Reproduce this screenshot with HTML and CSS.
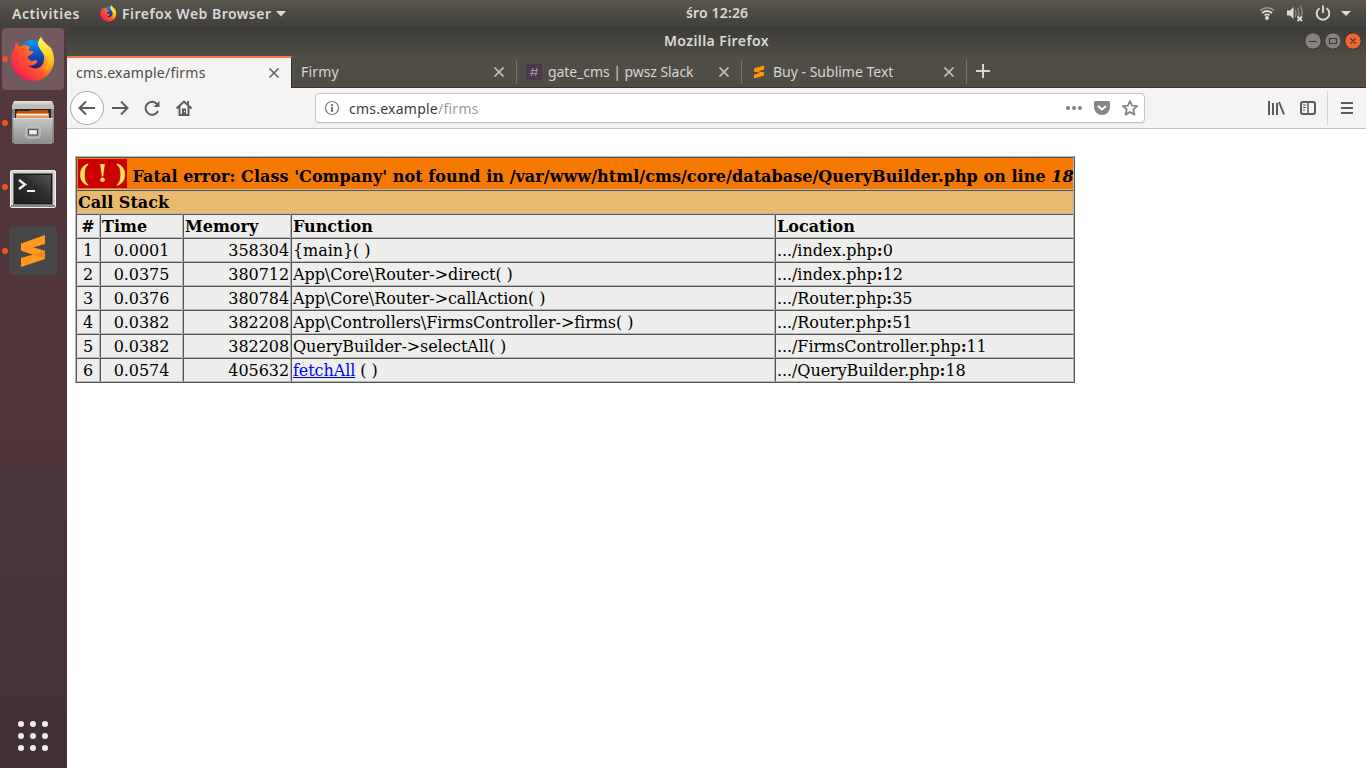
FILE: index.html
```html
<!DOCTYPE html>
<html lang="en">
<head>
<meta charset="utf-8">
<title>Mozilla Firefox</title>
<link rel="stylesheet" href="styles.css">
</head>
<body>
<svg width="0" height="0" class="defs">
  <defs>
    <linearGradient id="fire" x1="1" y1="0" x2="0.1" y2="1"><stop offset="0" stop-color="#fff44f"/><stop offset=".35" stop-color="#ffb01c"/><stop offset=".6" stop-color="#ff5a2c"/><stop offset=".85" stop-color="#f5204d"/><stop offset="1" stop-color="#c60b72"/></linearGradient>
    <linearGradient id="fox" x1="0" y1="1" x2="1" y2="0"><stop offset="0" stop-color="#f01867"/><stop offset=".5" stop-color="#ff4b2e"/><stop offset="1" stop-color="#ff9a1c"/></linearGradient>
    <linearGradient id="tail" x1="0" y1="0" x2="0" y2="1"><stop offset="0" stop-color="#fff36b"/><stop offset=".45" stop-color="#ffdf2e"/><stop offset="1" stop-color="#ff9d0a"/></linearGradient>
    <linearGradient id="globe" x1=".5" y1="0" x2=".5" y2="1"><stop offset="0" stop-color="#0a9bec"/><stop offset=".5" stop-color="#0a4fc8"/><stop offset="1" stop-color="#2a1668"/></linearGradient>
    <linearGradient id="metal" x1="0" y1="0" x2="0" y2="1"><stop offset="0" stop-color="#c6c6c6"/><stop offset="1" stop-color="#8c8c8c"/></linearGradient>
    <linearGradient id="lid" x1="0" y1="0" x2="0" y2="1"><stop offset="0" stop-color="#e8e8e8"/><stop offset="1" stop-color="#b4b4b4"/></linearGradient>
    <linearGradient id="screen" x1="0" y1="1" x2="1" y2="0"><stop offset="0" stop-color="#1d1f1e"/><stop offset=".55" stop-color="#2b2d2c"/><stop offset="1" stop-color="#555756"/></linearGradient>
    <symbol id="firefox" viewBox="0 0 44 46">
      <circle cx="22" cy="19" r="15" fill="url(#globe)"/>
      <path d="M5 6C6 9 8 10 9 11C12 9 16 9 19 11C18 13 17 14 18 15H22C22 18 19 19 17 20C16 23 19 25 22 25C25 24 27 25 26 26C24 29 20 30 17 29C22 35 32 33 33 24C34 19 31 16 28 11C26 7 28 3 30 1C32 6 37 9 40 12C49 29 37 45 22 45C8 45 0 34 0 23C0 18 2 14 4 12Z" fill="url(#fire)"/>
      <path d="M5 6C6 9 8 10 9 11C12 9 16 9 19 11C18 13 17 14 18 15H22C22 18 19 19 17 20C16 23 19 25 22 25C25 24 27 25 26 26C24 29 20 30 17 29C17 34 18 37 21 40C9 40 1 34 0 23C0 18 2 14 4 12Z" fill="url(#fox)"/>
      <path d="M30 1C32 6 37 9 40 14C44 23 40 30 35 35C35 31 38 25 33 18C29 13 24 8 30 1Z" fill="url(#tail)"/>
    </symbol>
    <symbol id="close" viewBox="0 0 12 12"><path d="M1.500 1.500L10.500 10.500M10.500 1.500L1.500 10.500" stroke="currentColor" stroke-width="1.700" fill="none"/></symbol>
  </defs>
</svg>
<div class="desktop">
  <header class="topbar">
    <span class="activities">Activities</span>
    <svg class="mini-fox" width="17" height="17"><use href="#firefox"/></svg>
    <span class="appname">Firefox Web Browser</span>
    <svg class="caret" width="10" height="6"><path d="M0 0H10L5 5.500Z" fill="#dcdad5"/></svg>
    <span class="clock">śro 12:26</span>
    <svg class="tray" width="100" height="27" viewBox="0 0 100 27">
      <g fill="none" stroke-width="1.700"><path d="M1 10.500Q8 5 15 10.500" stroke="#96948f"/><path d="M3 13Q8 9 13 13M5.500 15.200Q8 13.500 10.500 15.200" stroke="#dcdad5"/></g>
      <circle cx="8" cy="18" r="2" fill="#dcdad5"/>
      <path d="M28 10.500H31L34.500 7V19L31 15.500H28Z" fill="#dcdad5"/>
      <path d="M36 10Q38 13 36 17M38.500 8Q41.500 13 38.500 17M41 6Q45 12 42 16" fill="none" stroke="#8e8c86" stroke-width="1.300"/>
      <path d="M38.500 16.500L43 21M43 16.500L38.500 21" stroke="#dcdad5" stroke-width="1.800"/>
      <path d="M60.500 8.200A6.300 6.300 0 1 0 67.500 8.200M64 5.500V13" fill="none" stroke="#dcdad5" stroke-width="1.900"/>
      <path d="M82 11H92L87 16Z" fill="#dcdad5"/>
    </svg>
  </header>
  <div class="workspace">
    <aside class="dock">
      <div class="dock-item active"><i class="dot"></i><svg width="44" height="46"><use href="#firefox"/></svg></div>
      <div class="dock-item"><i class="dot"></i>
        <svg width="44" height="46" viewBox="0 0 44 46">
          <path d="M3 2H41L43 7V43H1V7Z" fill="#858585"/><path d="M3 1H41L43 6H1Z" fill="url(#lid)"/><rect x="1" y="5" width="42" height="4" fill="#bdbdbd"/>
          <rect x="4" y="9" width="36" height="10" fill="#292522"/><path d="M6 11H18L20 10H37V18H6Z" fill="#b94d16"/><rect x="5" y="13" width="33" height="5" fill="#ed944c"/><rect x="6" y="14" width="31" height="1.500" fill="#fff0dd"/>
          <path d="M2 18H42L41 44H3Z" fill="url(#metal)"/><path d="M2 18.500H42" stroke="#dedede"/>
          <rect x="15" y="27" width="14" height="11" rx="2" fill="#aaa" stroke="#c9c9c9"/><rect x="17.500" y="29.500" width="9" height="5.500" fill="#ececec" stroke="#555" stroke-width="1.200"/>
        </svg></div>
      <div class="dock-item terminal"><i class="dot"></i>
        <svg width="46" height="38" viewBox="0 0 46 38"><rect x=".5" y=".5" width="45" height="37" rx="1.500" fill="#d3d3d3" stroke="#eee"/><rect x="1" y="35" width="44" height="2" fill="#888"/><rect x="3.500" y="3.500" width="39" height="31" fill="#171918" stroke="#777"/><rect x="5" y="5" width="36" height="28" fill="url(#screen)"/><path d="M9 10L15 14.500L9 19" fill="none" stroke="#eee" stroke-width="2.400"/><rect x="17" y="20" width="8" height="2" fill="#f4f4f4"/></svg></div>
      <div class="dock-item"><i class="dot"></i>
        <svg width="48" height="48" viewBox="0 0 48 48"><rect width="48" height="48" rx="3" fill="#474747"/><path d="M12 16.500L36 8V17L24 20.500L36 24V32L12 40V31L24 27.500L12 23.500Z" fill="#ff9720"/><path d="M24 27.500L12 23.500L24 20.500L36 24V31L33 31Z" fill="#ff9720"/><path d="M24 27.500L36 24V31.500Z" fill="#ee8817"/></svg></div>
      <svg class="apps" width="32" height="32" viewBox="0 0 32 32" fill="#eeeceb"><circle cx="4" cy="4" r="3"/><circle cx="16" cy="4" r="3"/><circle cx="28" cy="4" r="3"/><circle cx="4" cy="16" r="3"/><circle cx="16" cy="16" r="3"/><circle cx="28" cy="16" r="3"/><circle cx="4" cy="28" r="3"/><circle cx="16" cy="28" r="3"/><circle cx="28" cy="28" r="3"/></svg>
    </aside>
    <main class="window">
      <div class="titlebar"><span class="wintitle">Mozilla Firefox</span>
        <svg class="controls" width="60" height="20" viewBox="0 0 60 20"><g stroke="#35342f"><circle cx="10" cy="10" r="8.200" fill="#85837c"/><circle cx="30" cy="10" r="8.200" fill="#85837c"/><circle cx="50" cy="10" r="8.200" fill="#f26434"/></g><path d="M6 10.500H14M26.500 7.500H33.500V12.500H26.500ZM47.500 7.500L52.500 12.500M52.500 7.500L47.500 12.500" fill="none" stroke="#3b3933" stroke-width="1.200"/></svg>
      </div>
      <nav class="tabs">
        <div class="tab current"><span class="t1">cms.example/firms</span><svg class="x" width="12" height="12"><use href="#close"/></svg></div>
        <div class="tab"><span class="t2">Firmy</span><svg class="x" width="12" height="12"><use href="#close"/></svg></div>
        <div class="tab sep"><svg class="fav" width="16" height="16" viewBox="0 0 16 16"><rect width="16" height="16" fill="#4d394b"/><path d="M7 4L5.500 12M11 4L9.500 12M4.500 6.500H12M4 9.500H11.500" stroke="#a394a2" fill="none"/></svg><span class="t3">gate_cms | pwsz Slack</span><svg class="x" width="12" height="12"><use href="#close"/></svg></div>
        <div class="tab sep"><svg class="fav" width="16" height="16" viewBox="0 0 16 16"><path d="M3 4.500L13 1.500V5.500L7.500 7.300L13 8.500V11.500L3 14.500V10.700L9 8.800L3 7.500Z" fill="#ff9800"/></svg><span class="t4">Buy - Sublime Text</span><svg class="x" width="12" height="12"><use href="#close"/></svg></div>
        <div class="newtab"><svg width="14" height="14"><path d="M7 0V14M0 7H14" stroke="#d8d5cf" stroke-width="2"/></svg></div>
      </nav>
      <div class="toolbar">
        <svg class="navicons" width="140" height="40" viewBox="0 0 140 40" fill="none" stroke="#5c5b59" stroke-width="2">
          <circle cx="20" cy="20" r="16.500" fill="#fff" stroke="#aaa8a5" stroke-width="1"/>
          <path d="M28 20H13M19 13.500L12.500 20L19 26.500M45 20H60M54 13.500L60.500 20L54 26.500"/>
          <path d="M90 16A6.500 6.500 0 1 0 91 23"/><path d="M92.500 13V19H86.500Z" fill="#5c5b59" stroke="none"/>
          <path d="M109.500 20.500L117 13.500L124.500 20.500M112.500 18.500V27H121.500V18.500"/><path d="M115 20.500H119V27H115ZM120 13H122V17L120 15Z" fill="#5c5b59" stroke="none"/><circle cx="117.500" cy="23.500" r=".7" fill="#fff" stroke="none"/>
        </svg>
        <div class="urlbar">
          <svg width="16" height="16" viewBox="0 0 16 16"><circle cx="8" cy="8" r="6.500" fill="none" stroke="#777" stroke-width="1.200"/><path d="M7 4H9V6H7ZM7 7H9V12H7Z" fill="#777"/></svg>
          <span class="url">cms.example<span>/firms</span></span>
          <svg class="urlicons" width="78" height="20" viewBox="0 0 78 20" fill="#858585"><circle cx="6" cy="10" r="2"/><circle cx="12" cy="10" r="2"/><circle cx="18" cy="10" r="2"/><path d="M33.500 3H46.500Q48 3 48 5V9A8 8 0 0 1 32 9V5Q32 3 33.500 3Z"/><path d="M36 8L40 11.500L44 8" fill="none" stroke="#fff" stroke-width="2"/><path d="M68 3L70.100 7.700L75.200 8.100L71.300 11.500L72.500 16.600L68 14L63.500 16.600L64.700 11.500L60.800 8.100L65.900 7.700Z" fill="none" stroke="#858585" stroke-width="1.800" stroke-linejoin="round"/></svg>
        </div>
        <svg class="right" width="100" height="40" viewBox="0 0 100 40" fill="none" stroke="#5c5b59" stroke-width="2"><path d="M4 13V27M8 15V27M12 15V27M14 14L19 26.500M76 15H88M76 20H88M76 25H88"/><rect x="36" y="14" width="14" height="12" rx="2"/><path d="M43 14V26" stroke-width="1.500"/><path d="M38 17H41M38 19.500H41M38 22H40" stroke-width="1"/><path d="M62.500 3V37" stroke="#d5d3d0" stroke-width="1"/></svg>
      </div>
      <section class="page">
        <table class="xdebug">
          <colgroup><col class="c1"><col class="c2"><col class="c3"><col class="c4"><col class="c5"></colgroup>
          <tr class="fatal"><th colspan="5"><span class="bang">( ! )</span> <span class="message">Fatal error: Class 'Company' not found in /var/www/html/cms/core/database/QueryBuilder.php on line <i>18</i></span></th></tr>
          <tr class="stack"><th colspan="5">Call Stack</th></tr>
          <tr><th class="center">#</th><th>Time</th><th>Memory</th><th>Function</th><th>Location</th></tr>
          <tr><td class="center">1</td><td class="center">0.0001</td><td class="num">358304</td><td>{main}( )</td><td>.../index.php<b>:</b>0</td></tr>
          <tr><td class="center">2</td><td class="center">0.0375</td><td class="num">380712</td><td>App\Core\Router-&gt;direct( )</td><td>.../index.php<b>:</b>12</td></tr>
          <tr><td class="center">3</td><td class="center">0.0376</td><td class="num">380784</td><td>App\Core\Router-&gt;callAction( )</td><td>.../Router.php<b>:</b>35</td></tr>
          <tr><td class="center">4</td><td class="center">0.0382</td><td class="num">382208</td><td>App\Controllers\FirmsController-&gt;firms( )</td><td>.../Router.php<b>:</b>51</td></tr>
          <tr><td class="center">5</td><td class="center">0.0382</td><td class="num">382208</td><td>QueryBuilder-&gt;selectAll( )</td><td>.../FirmsController.php<b>:</b>11</td></tr>
          <tr><td class="center">6</td><td class="center">0.0574</td><td class="num">405632</td><td><a href="#">fetchAll</a> ( )</td><td>.../QueryBuilder.php<b>:</b>18</td></tr>
        </table>
      </section>
    </main>
  </div>
</div>
</body>
</html>
```

FILE: styles.css
```css
* { box-sizing: border-box; }
body { margin: 0; overflow: hidden; font: 14px/20px "Noto Sans", "Open Sans", sans-serif; }
svg { display: block; flex: none; }
.defs { position: absolute; }
.desktop { width: 1366px; height: 768px; display: flex; flex-direction: column; }
.topbar { position: relative; height: 27px; display: flex; align-items: center; padding-left: 12px; color: #dcdad5; font-weight: 600; background: linear-gradient(#59564d, #403f3a); white-space: nowrap; }
.activities { width: 88px; letter-spacing: .56px; }
.mini-fox { margin-right: 5px; }
.appname { width: 154px; letter-spacing: .48px; }
.clock { position: absolute; left: 686px; top: 3px; letter-spacing: .15px; }
.tray { margin-left: auto; margin-right: 7px; }
.workspace { flex: 1; min-height: 0; display: flex; }
.dock { width: 67px; display: flex; flex-direction: column; padding: 1px 3px 16px 2px; background: linear-gradient(#53383d, #4e353a 50%, #403136); }
.dock-item { width: 62px; height: 62px; margin-bottom: 2px; display: flex; align-items: center; justify-content: center; position: relative; border-radius: 4px; }
.dock-item.active { background: #705a5e; }
.terminal { padding-top: 3px; }
.dot { position: absolute; left: 0; top: 28px; width: 6px; height: 6px; border-radius: 50%; background: #e95420; }
.apps { margin: auto auto 0 15px; }
.window { flex: 1; min-width: 0; display: flex; flex-direction: column; background: #fff; }
.titlebar { height: 29px; position: relative; display: flex; align-items: center; justify-content: center; padding-bottom: 2px; color: #dcdad5; font-weight: 600; letter-spacing: .42px; background: linear-gradient(#3c3b37, #504d46); }
.controls { position: absolute; right: 3px; top: 4px; }
.tabs { height: 32px; display: flex; background: #504d46; border-bottom: 1px solid #353430; color: #d8d5cf; }
.tab { width: 225px; height: 31px; display: flex; align-items: center; padding: 1px 12px 0 9px; white-space: nowrap; position: relative; }
.tab.current { height: 32px; background: #f5f4f2; border-top: 2px solid #f07746; border-right: 1px solid #353430; color: #4c4c4c; padding: 0 11px 1px 9px; }
.tab .x { margin-left: auto; color: #c9c6bf; }
.tab.current .x { color: #666; }
.tab.sep::before, .newtab::before { content: ""; position: absolute; left: -1px; top: 4px; width: 1px; height: 24px; background: #77746d; }
.t1, .url { letter-spacing: .24px; }
.t2 { letter-spacing: .2px; }
.t3 { letter-spacing: -.06px; }
.fav { margin-right: 6px; }
.newtab { position: relative; padding: 8px 9px; }
.toolbar { height: 41px; display: flex; align-items: center; background: #f5f4f2; border-bottom: 1px solid #c8c5c1; }
.urlbar { width: 830px; height: 30px; margin-left: 108px; border: 1px solid #c6c3bf; border-radius: 4px; background: #fff; display: flex; align-items: center; padding: 0 4px 0 8px; box-shadow: 0 1px 1px #e7e5e2; }
.url { margin-left: 9px; padding-top: 1px; color: #3d3d3d; white-space: nowrap; }
.url span { color: #999; }
.urlicons { margin-left: auto; }
.right { margin-left: auto; margin-right: 1px; }
.page { flex: 1; padding: 27px 8px; }
.xdebug { width: 1000px; table-layout: fixed; border-collapse: separate; border-spacing: 0; border: 1px solid; border-color: #b8b8b8 #555 #555 #b8b8b8; font: 16px/20px "DejaVu Serif", serif; color: #000; background: #eeeeec; }
.xdebug th, .xdebug td { height: 24px; padding: 2px 1px 0; border: 1px solid; border-color: #555 #b8b8b8 #b8b8b8 #555; text-align: left; white-space: nowrap; vertical-align: middle; }
.xdebug td { letter-spacing: -.07px; }
.xdebug .center { text-align: center; }
.xdebug .num { text-align: right; }
.c1 { width: 24px; } .c2 { width: 83px; } .c3 { width: 108px; } .c4 { width: 484px; } .c5 { width: 299px; }
.xdebug .fatal th { height: 33px; padding: 1px; background: #f57900; line-height: 29px; }
.xdebug .stack th { background: #e9b96e; }
.bang { display: inline-block; width: 49px; height: 29px; background: #cc0000; color: #fce94f; font-size: 24px; letter-spacing: -.2px; vertical-align: top; }
.message { display: inline-block; height: 29px; padding-top: 3px; letter-spacing: .05px; line-height: 29px; vertical-align: top; overflow: visible; }
.xdebug a { color: #0000ee; }
```
